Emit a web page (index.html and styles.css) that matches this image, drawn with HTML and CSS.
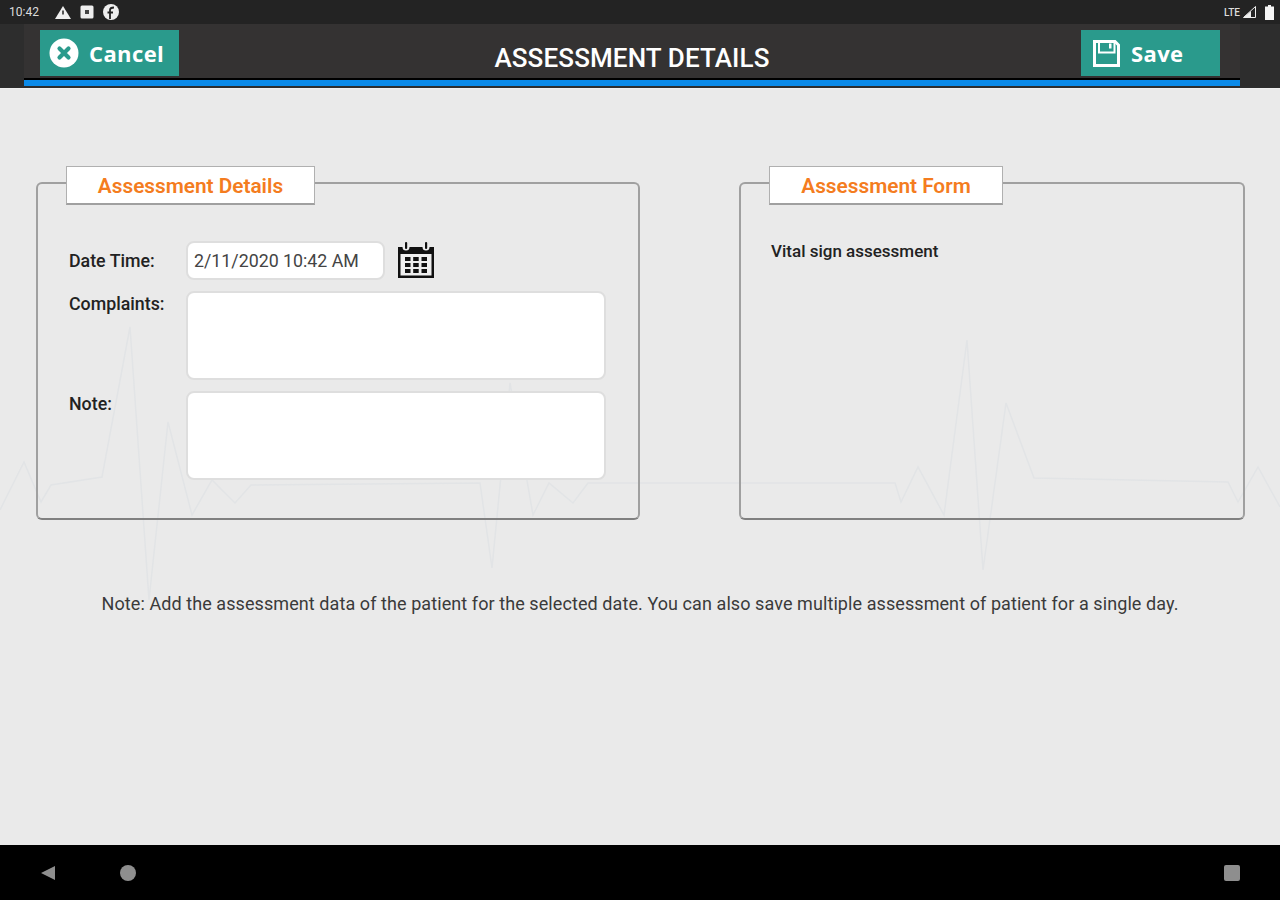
FILE: index.html
```html
<!DOCTYPE html>
<html lang="en">
<head>
<meta charset="utf-8">
<title>Assessment Details</title>
<link rel="stylesheet" href="styles.css">
</head>
<body>
<div class="screen">
  <div class="status">
    <div class="status-left">
      <span class="clock">10:42</span>
      <svg width="16" height="15" viewBox="0 0 16 15"><path d="M8 1 16 14H0Z" fill="#eee"/><rect x="7" y="5.500" width="2" height="4" fill="#555"/></svg>
      <svg width="14" height="14" viewBox="0 0 14 14"><rect x=".5" y=".5" width="13" height="13" rx="1.500" fill="#eee"/><rect x="5" y="5" width="4" height="4" fill="#444"/></svg>
      <svg class="fb" width="18" height="18" viewBox="0 0 18 18"><circle cx="9" cy="9" r="8" fill="#eee"/><path d="M8 16V7Q8 4.500 12 4.500M5.500 9.500H11" stroke="#222" stroke-width="1.800" fill="none"/></svg>
    </div>
    <div class="status-right">
      <span class="lte">LTE</span>
      <svg width="13" height="12" viewBox="0 0 13 12"><path d="M12.500 .5V11.500H.5Z" fill="none" stroke="#eee" stroke-width="1"/><path d="M8 5V11.500H.5Z" fill="#eee"/></svg>
      <svg class="batt" width="9" height="15" viewBox="0 0 9 15"><path d="M3 0H6V1.500H9V15H0V1.500H3Z" fill="#f4f4f4"/></svg>
    </div>
  </div>
  <header class="header">
    <div class="bar">
      <button class="btn btn-cancel">
        <svg width="30" height="30" viewBox="0 0 30 30"><circle cx="15" cy="15" r="14.500" fill="#fff"/><path d="M10.500 10.500 19.500 19.500M19.500 10.500 10.500 19.500" stroke="#2a9a8c" stroke-width="4.200" stroke-linecap="round"/></svg>
        <span>Cancel</span>
      </button>
      <h1 class="title">ASSESSMENT DETAILS</h1>
      <button class="btn btn-save">
        <svg width="27" height="27" viewBox="0 0 27 27"><path d="M1.500 1.500H22L25.500 5V25.500H1.500Z" fill="none" stroke="#fff" stroke-width="3"/><path d="M6 2V12.500H21.500V2" fill="none" stroke="#fff" stroke-width="2"/><rect x="16" y="3.500" width="2.500" height="5" fill="#fff"/></svg>
        <span>Save</span>
      </button>
    </div>
  </header>
  <main class="main">
    <svg class="ecg" width="1280" height="757" viewBox="0 88 1280 757">
      <polyline fill="none" stroke="#e2e4e6" stroke-width="1.500" points="0,510 24,462 41,502 51,485 102,477 130,327 149,600 168,422 192,515 212,480 235,503 251,485 480,483 492,568 510,383 533,515 549,483 573,503 588,483 895,483 901,502 918,467 944,515 967,340 983,570 1006,403 1034,478 1228,482 1238,502 1258,467 1280,507"/>
    </svg>
    <div class="panels">
      <section class="panel panel-left">
        <div class="legend legend-left">Assessment Details</div>
        <div class="form">
          <div class="row row-date">
            <label class="lbl">Date Time:</label>
            <div class="input date">2/11/2020 10:42 AM</div>
            <svg class="cal" width="38" height="36" viewBox="0 0 38 36"><path d="M1 5H37V36H1Z" fill="#111"/><rect x="3.500" y="12" width="31" height="21.500" fill="#efefef"/><circle cx="9" cy="5" r="3.500" fill="#efefef"/><circle cx="29" cy="5" r="3.500" fill="#efefef"/><rect x="8" y="0" width="2.200" height="7" rx="1" fill="#111"/><rect x="28" y="0" width="2.200" height="7" rx="1" fill="#111"/><g fill="#111"><rect x="8" y="15" width="5.500" height="4"/><rect x="16.200" y="15" width="5.500" height="4"/><rect x="24.500" y="15" width="5.500" height="4"/><rect x="8" y="21" width="5.500" height="4"/><rect x="16.200" y="21" width="5.500" height="4"/><rect x="24.500" y="21" width="5.500" height="4"/><rect x="8" y="27" width="5.500" height="4"/><rect x="16.200" y="27" width="5.500" height="4"/><rect x="24.500" y="27" width="5.500" height="4"/></g></svg>
          </div>
          <div class="row">
            <label class="lbl lbl-area">Complaints:</label>
            <div class="input area"></div>
          </div>
          <div class="row">
            <label class="lbl lbl-area">Note:</label>
            <div class="input area"></div>
          </div>
        </div>
      </section>
      <section class="panel panel-right">
        <div class="legend legend-right">Assessment Form</div>
        <div class="vital">Vital sign assessment</div>
      </section>
    </div>
    <p class="note">Note: Add the assessment data of the patient for the selected date. You can also save multiple assessment of patient for a single day.</p>
  </main>
  <nav class="nav">
    <svg width="16" height="16" viewBox="0 0 16 16"><path d="M15 1V15L1 8Z" fill="#8e8e8e"/></svg>
    <span class="nav-circle"></span>
    <span class="nav-square"></span>
  </nav>
</div>
</body>
</html>
```
FILE: styles.css
```css
* { box-sizing: border-box; }
html, body { margin: 0; padding: 0; }
body { width: 1280px; height: 900px; overflow: hidden; font-family: Roboto, "Liberation Sans", sans-serif; }
.screen { width: 1280px; height: 900px; display: flex; flex-direction: column; background: #eaeaea; }

.status { height: 24px; flex: none; background: #232323; display: flex; justify-content: space-between; align-items: center; padding: 0 6px 0 9px; color: #ddd; }
.status-left { display: flex; align-items: center; gap: 9px; }
.status-right { display: flex; align-items: center; gap: 3px; }
.batt { margin-left: 6px; }
.clock { font-size: 12px; width: 37px; }
.lte { font-size: 10px; font-weight: 500; }
.fb { margin-left: -1px; }

.header { height: 64px; flex: none; background: #2d2d2d; padding: 0 40px 0 24px; }
.bar { height: 62px; background: #343232; border-bottom: 8px solid #000; position: relative; display: flex; justify-content: space-between; align-items: flex-start; padding: 6px 20px 0 16px; }
.bar::after { content: ""; position: absolute; left: 0; right: 0; bottom: -8px; height: 6px; background: #0b8ae8; }
.btn { width: 139px; height: 46px; border: 0; background: #2a9a8c; color: #fff; display: flex; align-items: center; font-family: "Open Sans", sans-serif; font-weight: 700; font-size: 22px; letter-spacing: .4px; padding: 0; }
.btn-cancel { gap: 10px; padding-left: 9px; }
.btn-save { gap: 11px; padding-left: 12px; }
.title { margin: 8px 0 0 4px; font-size: 26px; letter-spacing: .12px; line-height: 40px; font-weight: 500; color: #fff; }

.main { flex: 1; position: relative; background: #eaeaea; border-top: 1px solid #f0f0f0; overflow: hidden; }
.ecg { position: absolute; left: 0; top: -1px; }
.panels { position: relative; display: flex; justify-content: space-between; padding: 93px 35px 0 36px; }
.panel { position: relative; height: 338px; border: 2px solid #a0a0a0; border-bottom-color: #808080; border-radius: 6px; }
.panel-left { width: 604px; }
.panel-right { width: 506px; }
.legend { position: absolute; top: -18px; height: 39px; padding-top: 1px; background: #fff; border: 1px solid #b0b0b0; border-bottom: 2px solid #a0a0a0; color: #f47c20; font-weight: 600; font-size: 20.800px; display: flex; align-items: center; justify-content: center; }
.legend-left { left: 28px; width: 249px; }
.legend-right { left: 28px; width: 234px; }

.form { padding: 56px 32px 0 31px; display: flex; flex-direction: column; gap: 11px; }
.row { display: flex; align-items: flex-start; }
.row-date { align-items: center; height: 40px; }
.lbl { width: 117px; flex: none; font-size: 17.800px; font-weight: 500; color: #222; }
.row-date .lbl { padding-top: 1px; }
.lbl-area { padding-top: 2px; }
.input { background: #fff; border: 2px solid #dedede; border-radius: 8px; }
.date { width: 199px; height: 39px; font-size: 17.800px; color: #444; display: flex; align-items: center; padding-left: 6px; }
.cal { margin-left: 12px; }
.area { width: 420px; height: 89px; }
.vital { padding: 57px 0 0 30px; font-size: 17px; font-weight: 500; color: #222; }

.note { position: relative; margin: 74px 0 0; text-align: center; font-size: 18px; letter-spacing: .08px; line-height: 20px; color: #3a3a3a; }

.nav { height: 55px; flex: none; background: #000; position: relative; display: flex; align-items: center; padding: 0 40px; }
.nav-circle { width: 16px; height: 16px; border-radius: 50%; background: #8e8e8e; margin-left: 64px; }
.nav-square { width: 16px; height: 16px; border-radius: 2px; background: #8e8e8e; margin-left: auto; }
```
